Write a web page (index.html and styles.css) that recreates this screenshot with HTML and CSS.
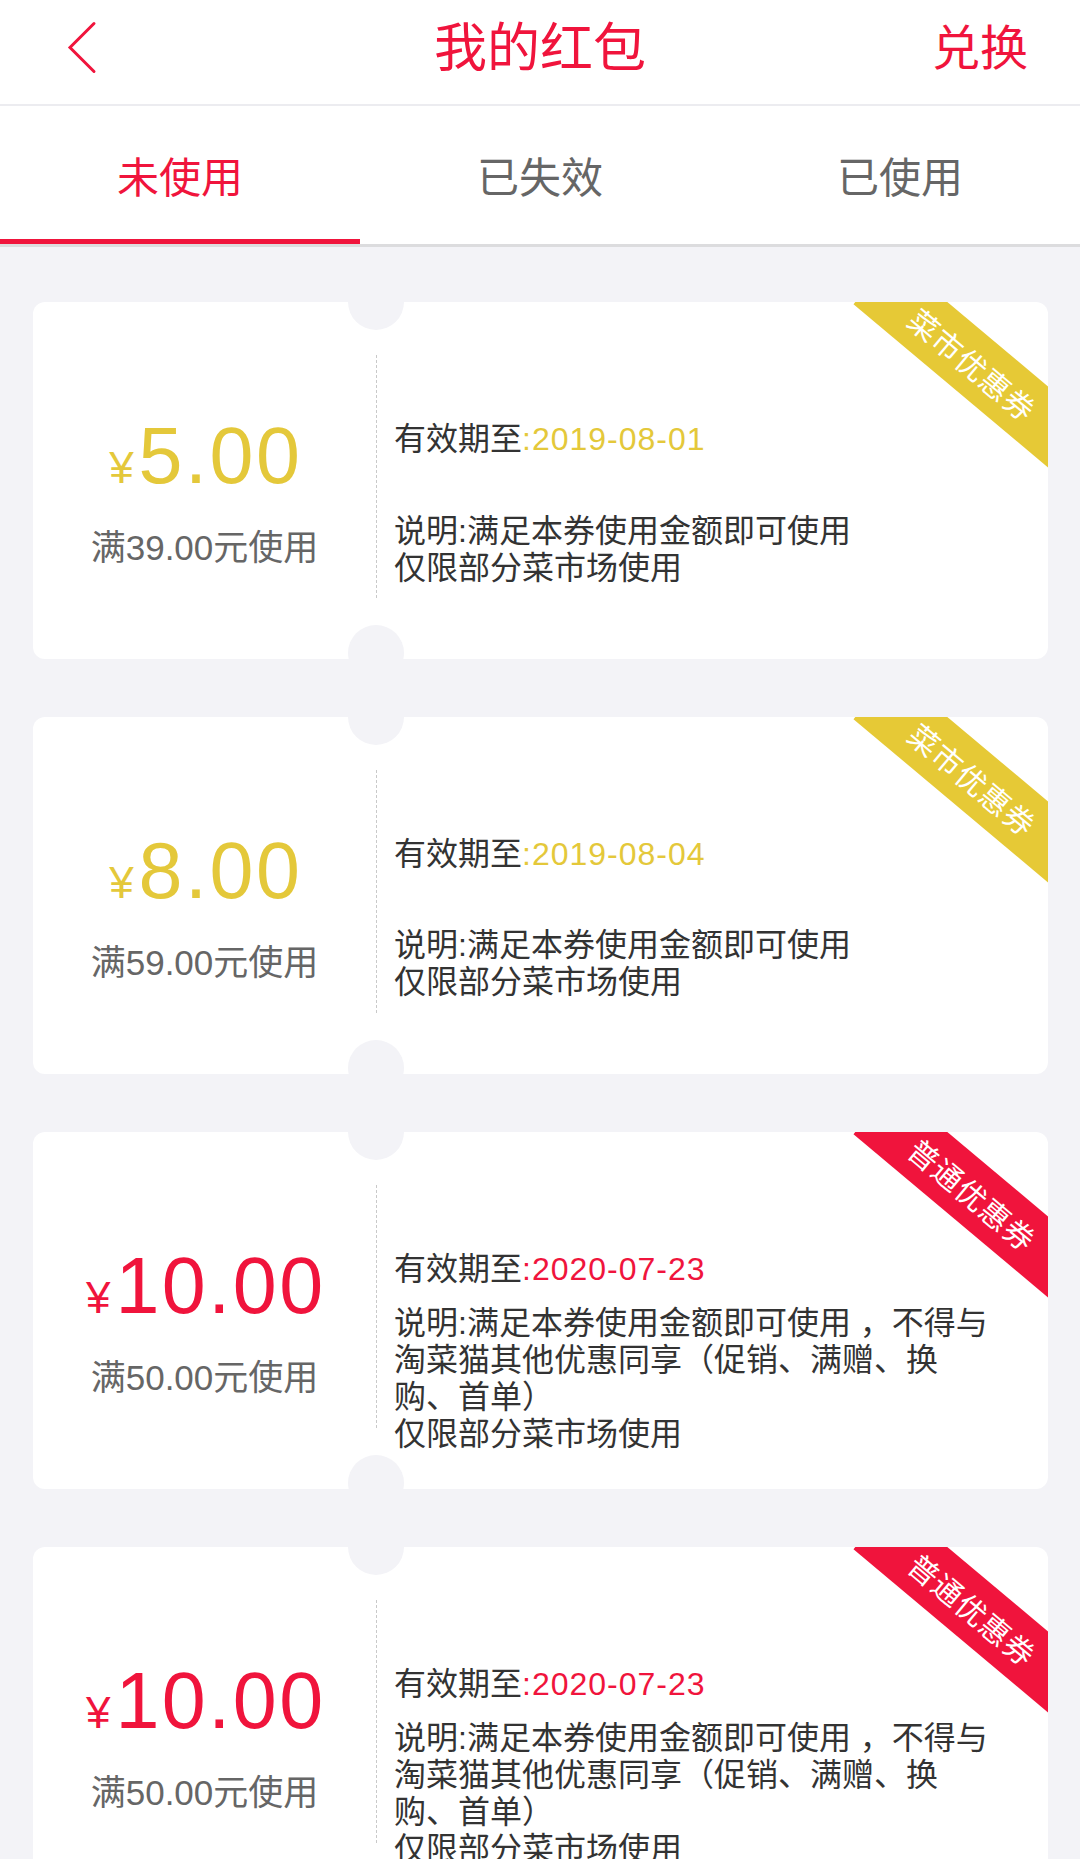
FILE: index.html
```html
<!DOCTYPE html>
<html lang="zh-CN">
<head>
<meta charset="utf-8">
<title>我的红包</title>
<link rel="stylesheet" href="styles.css">
</head>
<body>
<header class="nav">
  <div class="nav-left">
    <svg class="back" width="32" height="54" viewBox="0 0 32 54"><path d="M28 2.5 L4 26.5 L28 50.5" fill="none" stroke="#f0143c" stroke-width="3" stroke-linecap="round" stroke-linejoin="miter"/></svg>
  </div>
  <h1 class="nav-title">我的红包</h1>
  <div class="nav-right">兑换</div>
</header>

<nav class="tabs">
  <div class="tab tab--active">未使用</div>
  <div class="tab">已失效</div>
  <div class="tab">已使用</div>
</nav>

<main class="list">
  <section class="coupon coupon--yellow">
    <span class="notch notch--top"></span><span class="notch notch--bottom"></span>
    <div class="ribbon"><span class="ribbon-text">菜市优惠券</span></div>
    <div class="amount-col">
      <div class="amount"><span class="yen">¥</span><span class="num">5.00</span></div>
      <div class="cond">满39.00元使用</div>
    </div>
    <div class="divider"></div>
    <div class="info-col">
      <div class="date">有效期至<span class="date-val">:2019-08-01</span></div>
      <div class="desc"><p>说明:满足本券使用金额即可使用</p><p>仅限部分菜市场使用</p></div>
    </div>
  </section>

  <section class="coupon coupon--yellow">
    <span class="notch notch--top"></span><span class="notch notch--bottom"></span>
    <div class="ribbon"><span class="ribbon-text">菜市优惠券</span></div>
    <div class="amount-col">
      <div class="amount"><span class="yen">¥</span><span class="num">8.00</span></div>
      <div class="cond">满59.00元使用</div>
    </div>
    <div class="divider"></div>
    <div class="info-col">
      <div class="date">有效期至<span class="date-val">:2019-08-04</span></div>
      <div class="desc"><p>说明:满足本券使用金额即可使用</p><p>仅限部分菜市场使用</p></div>
    </div>
  </section>

  <section class="coupon coupon--red">
    <span class="notch notch--top"></span><span class="notch notch--bottom"></span>
    <div class="ribbon"><span class="ribbon-text">普通优惠券</span></div>
    <div class="amount-col">
      <div class="amount"><span class="yen">¥</span><span class="num">10.00</span></div>
      <div class="cond">满50.00元使用</div>
    </div>
    <div class="divider"></div>
    <div class="info-col">
      <div class="date">有效期至<span class="date-val">:2020-07-23</span></div>
      <div class="desc"><p>说明:满足本券使用金额即可使用 ，不得与<br>淘菜猫其他优惠同享（促销、满赠、换<br>购、首单）</p><p>仅限部分菜市场使用</p></div>
    </div>
  </section>

  <section class="coupon coupon--red">
    <span class="notch notch--top"></span><span class="notch notch--bottom"></span>
    <div class="ribbon"><span class="ribbon-text">普通优惠券</span></div>
    <div class="amount-col">
      <div class="amount"><span class="yen">¥</span><span class="num">10.00</span></div>
      <div class="cond">满50.00元使用</div>
    </div>
    <div class="divider"></div>
    <div class="info-col">
      <div class="date">有效期至<span class="date-val">:2020-07-23</span></div>
      <div class="desc"><p>说明:满足本券使用金额即可使用 ，不得与<br>淘菜猫其他优惠同享（促销、满赠、换<br>购、首单）</p><p>仅限部分菜市场使用</p></div>
    </div>
  </section>
</main>
</body>
</html>
```

FILE: styles.css
```css
* { box-sizing: border-box; }

html, body {
  margin: 0;
  padding: 0;
}

body {
  background: #f3f3f7;
  font-family: "Liberation Sans", "Noto Sans CJK SC", sans-serif;
  color: #333;
}

/* ---------- navigation bar ---------- */
.nav {
  display: grid;
  grid-template-columns: 1fr auto 1fr;
  align-items: center;
  height: 106px;
  padding-bottom: 14px;
  background: #fff;
  border-bottom: 2px solid #ececf0;
}

.nav-left {
  padding-left: 66px;
  display: flex;
  align-items: center;
}

.back { display: block; margin-top: 5px; }

.nav-title {
  margin: 0;
  font-family: "Noto Sans CJK SC", sans-serif;
  font-weight: 400;
  font-size: 53px;
  line-height: 1.2;
  color: #f0143c;
}

.nav-right {
  justify-self: end;
  padding-right: 52px;
  font-family: "Noto Sans CJK SC", sans-serif;
  font-size: 48px;
  line-height: 1.2;
  color: #f0143c;
}

/* ---------- tabs ---------- */
.tabs {
  display: flex;
  height: 141px;
  background: #fff;
  border-bottom: 3px solid #dcdcde;
}

.tab {
  position: relative;
  flex: 1;
  display: flex;
  align-items: center;
  justify-content: center;
  font-family: "Noto Sans CJK SC", sans-serif;
  font-size: 42px;
  line-height: 1.2;
  color: #666;
}

.tab--active { color: #f0143c; }

.tab--active::after {
  content: "";
  position: absolute;
  left: 0;
  right: 0;
  bottom: 0;
  height: 5px;
  background: #f0143c;
}

/* ---------- coupon list ---------- */
.list {
  padding: 55px 32px 0 33px;
  display: flex;
  flex-direction: column;
  gap: 57.7px;
}

.coupon {
  position: relative;
  display: flex;
  height: 357.3px;
  flex-shrink: 0;
  background: #fff;
  border-radius: 12px;
  overflow: hidden;
}

.notch {
  position: absolute;
  left: 315px;
  width: 56px;
  height: 56px;
  border-radius: 50%;
  background: #f3f3f7;
}

.notch--top { top: -28px; }
.notch--bottom { bottom: -22px; }

.ribbon {
  position: absolute;
  top: 31px;
  right: -55px;
  width: 260px;
  height: 62px;
  transform: rotate(40deg);
  display: flex;
  align-items: center;
  justify-content: center;
  font-family: "Noto Sans CJK SC", sans-serif;
  font-size: 30px;
  color: #fff;
}

.ribbon-text {
  line-height: 34px;
  letter-spacing: 1px;
}

.coupon--yellow .ribbon { background: #e6c936; }
.coupon--red .ribbon { background: #f0143c; }

.amount-col {
  width: 343px;
  flex-shrink: 0;
  display: flex;
  flex-direction: column;
  align-items: center;
  padding-top: 114px;
}

.amount {
  display: flex;
  align-items: baseline;
}

.yen {
  font-size: 44px;
  line-height: 1;
  margin-right: 5px;
}

.num {
  font-size: 79px;
  line-height: 1;
  letter-spacing: 2.5px;
  margin-right: -2.5px;
}

.coupon--yellow .amount,
.coupon--yellow .date-val { color: #e4c83a; }

.coupon--red .amount,
.coupon--red .date-val { color: #f0143c; }

.cond {
  margin-top: 33px;
  font-size: 35px;
  line-height: 40px;
  color: #666;
}

.divider {
  flex-shrink: 0;
  align-self: flex-start;
  margin-top: 53px;
  height: 243px;
  width: 0;
  border-left: 1px dashed #c9c9c9;
}

.info-col {
  flex: 1;
  padding: 102px 0 0 17px;
  font-size: 32px;
  line-height: 37px;
  color: #333;
}

.date {
  height: 71px;
  display: flex;
  align-items: center;
  white-space: nowrap;
}

.date-val { letter-spacing: 1px; }

.desc {
  height: 149px;
  display: flex;
  flex-direction: column;
  justify-content: center;
}

.desc p { margin: 0; }
```
